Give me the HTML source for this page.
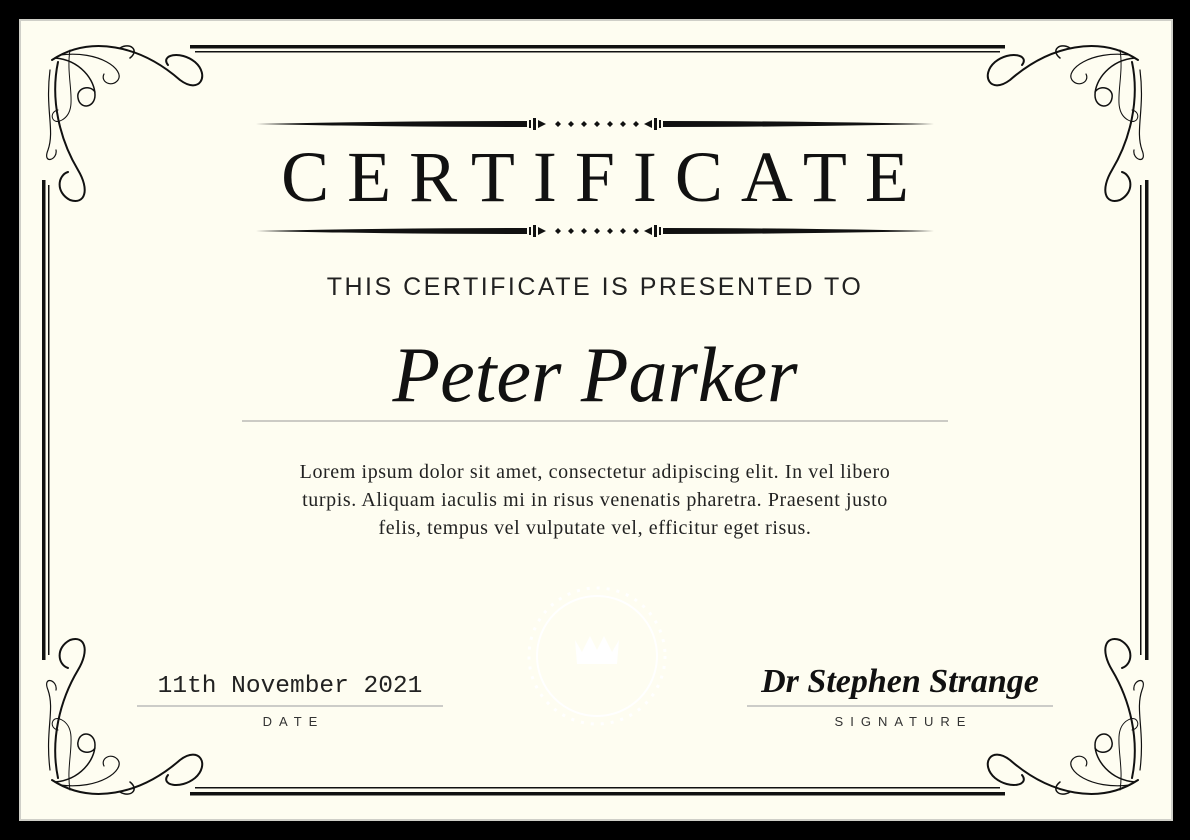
<!DOCTYPE html>
<html><head><meta charset="utf-8"><style>
*{margin:0;padding:0;box-sizing:border-box}
body{width:1190px;height:840px;background:#000;position:relative;overflow:hidden;font-family:"Liberation Serif",serif}
.abs{position:absolute}
.c{text-align:center;white-space:nowrap}
</style></head><body>
<div class="abs" style="left:19px;top:19px;width:1154px;height:802px;border:2px solid #cfcfc8;background:#fefdf1"></div>
<div class="abs" style="left:23px;top:23px;width:1146px;height:794px;background:#fefdf1"></div>
<svg class="abs" style="left:0;top:0" width="1190" height="840">
<g fill="#111">
<rect x="190" y="45" width="815" height="3.5"/><rect x="195" y="51" width="805" height="1.5"/>
<rect x="190" y="792" width="815" height="3.5"/><rect x="195" y="787" width="805" height="1.5"/>
<rect x="42" y="180" width="3.5" height="480"/><rect x="48" y="185" width="1.5" height="470"/>
<rect x="1145" y="180" width="3.5" height="480"/><rect x="1140" y="185" width="1.5" height="470"/>
<path d="M256 124 Q400 121 527 121 L527 127 Q400 127 256 124Z"/><path d="M934 124 Q790 121 663 121 L663 127 Q790 127 934 124Z"/>
<path d="M256 231 Q400 228 527 228 L527 234 Q400 234 256 231Z"/><path d="M934 231 Q790 228 663 228 L663 234 Q790 234 934 231Z"/>
<g id="orn"><rect x="529" y="120" width="2" height="8"/><rect x="533" y="118" width="3" height="12"/><path d="M538 120 L546 124 L538 128Z"/>
<path d="M652 120 L644 124 L652 128Z"/><rect x="654" y="118" width="3" height="12"/><rect x="659" y="120" width="2" height="8"/>
<path d="M555 124l3-3 3 3-3 3z M568 124l3-3 3 3-3 3z M581 124l3-3 3 3-3 3z M594 124l3-3 3 3-3 3z M607 124l3-3 3 3-3 3z M620 124l3-3 3 3-3 3z M633 124l3-3 3 3-3 3z"/></g>
<use href="#orn" y="107"/>
</g>
<g fill="none" stroke="#111" stroke-linecap="round">
<g id="sw">
<path d="M52 60 C90 35 140 45 180 80 C200 95 210 75 195 62 C180 50 160 55 168 65" stroke-width="2"/>
<path d="M58 62 C50 100 60 140 78 170 C90 190 85 205 70 200 C55 192 58 175 68 172" stroke-width="2"/>
<path d="M55 58 C80 60 95 80 95 95 C95 108 80 110 78 98 C76 88 90 84 95 92" stroke-width="1.5"/>
<path d="M60 55 C100 50 125 70 118 80 C112 88 100 82 104 74" stroke-width="1.2"/>
<path d="M50 70 C45 110 55 130 48 150 C42 165 58 160 56 150" stroke-width="1.2"/>
<path d="M70 50 C65 80 80 110 62 120 C52 126 48 112 58 110" stroke-width="1"/>
<path d="M120 48 C130 42 140 50 130 58" stroke-width="1.5"/>
</g>
<use href="#sw" transform="translate(1190 0) scale(-1 1)"/>
<use href="#sw" transform="translate(0 840) scale(1 -1)"/>
<use href="#sw" transform="translate(1190 840) scale(-1 -1)"/>
</g>
<g fill="none" stroke="#fff" stroke-width="3">
<circle cx="597" cy="656" r="68" stroke-dasharray="3 7"/><circle cx="597" cy="656" r="60" stroke-width="2"/>
</g>
<path d="M575 640 L582 652 L590 636 L597 650 L604 636 L612 652 L619 640 L617 664 L577 664Z" fill="#fff"/>
<line x1="242" y1="421" x2="948" y2="421" stroke="#999" stroke-width="1"/>
<line x1="137" y1="706" x2="443" y2="706" stroke="#bbb" stroke-width="1.5"/>
<line x1="747" y1="706" x2="1053" y2="706" stroke="#bbb" stroke-width="1.5"/>
</svg>
<div class="abs c" style="left:0;width:1190px;top:134px;font-size:72px;letter-spacing:18px;padding-left:18px;color:#111;line-height:86px">CERTIFICATE</div>
<div class="abs c" style="left:0;width:1190px;top:272px;font-family:'Liberation Sans',sans-serif;font-size:25px;color:#222;line-height:30px;letter-spacing:2.5px">THIS CERTIFICATE IS PRESENTED TO</div>
<div class="abs c" style="left:0;width:1190px;top:330px;font-size:78px;font-style:italic;color:#111;line-height:90px">Peter Parker</div>
<div class="abs c" style="left:0;width:1190px;top:458px;font-size:20px;letter-spacing:0.6px;line-height:28px;color:#222">Lorem ipsum dolor sit amet, consectetur adipiscing elit. In vel libero<br>turpis. Aliquam iaculis mi in risus venenatis pharetra. Praesent justo<br>felis, tempus vel vulputate vel, efficitur eget risus.</div>
<div class="abs c" style="left:137px;width:306px;top:673px;font-family:'Liberation Mono',monospace;font-size:24.5px;color:#222;line-height:28px">11th November 2021</div>
<div class="abs c" style="left:137px;width:306px;top:714px;font-family:'Liberation Sans',sans-serif;font-size:13px;letter-spacing:7px;padding-left:7px;color:#333">DATE</div>
<div class="abs c" style="left:747px;width:306px;top:660px;font-size:34px;font-style:italic;font-weight:bold;color:#111;line-height:44px">Dr Stephen Strange</div>
<div class="abs c" style="left:747px;width:306px;top:714px;font-family:'Liberation Sans',sans-serif;font-size:13px;letter-spacing:7px;padding-left:7px;color:#333">SIGNATURE</div>
</body></html>
